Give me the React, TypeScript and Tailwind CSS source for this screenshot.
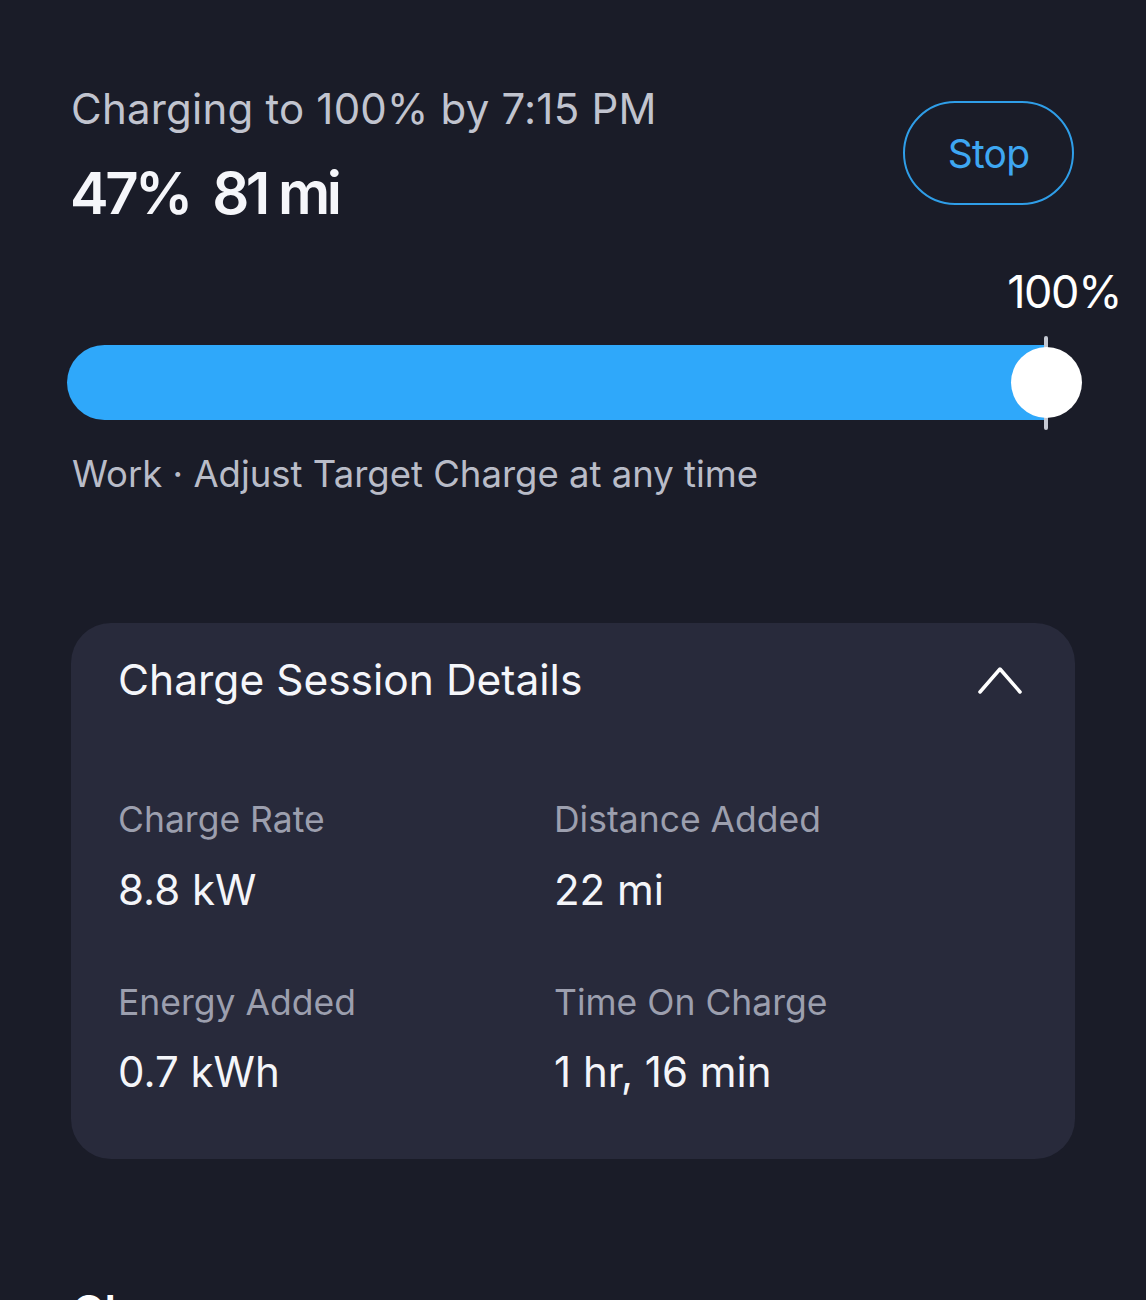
import React from "react";

const details = [
  { label: "Charge Rate", value: "8.8 kW" },
  { label: "Distance Added", value: "22 mi" },
  { label: "Energy Added", value: "0.7 kWh" },
  { label: "Time On Charge", value: "1 hr, 16 min" },
];

const ChevronUp = () => (
  <svg width="44" height="30" viewBox="0 0 44 30" fill="none">
    <polyline
      points="2,27 22,4 42,27"
      stroke="#ffffff"
      strokeWidth="3.5"
      strokeLinecap="round"
      strokeLinejoin="round"
    />
  </svg>
);

const ChargeSlider = ({ percent }: { percent: number }) => {
  // track fills up to the knob center
  return (
    <div className="relative ml-[67px] mt-[22px] h-[94px] w-[1014px]">
      <div
        className="absolute left-0 top-[9px] h-[75px] rounded-l-full bg-[#2fa8fa]"
        style={{ width: `${(979 * percent) / 100}px` }}
      />
      <div className="absolute left-[977px] top-0 h-[94px] w-[4px] rounded-full bg-[#c5c9d3]" />
      <div className="absolute left-[944px] top-[11px] h-[71px] w-[71px] rounded-full bg-white" />
    </div>
  );
};

const App = () => {
  return (
    <div
      className="h-[1300px] w-full overflow-hidden bg-[#1a1c28] text-white"
      style={{ fontFamily: "Inter, 'Noto Sans', sans-serif" }}
    >
      {/* Header */}
      <div className="flex justify-between px-[72px] pt-[88px]">
        <div>
          <p className="-ml-[1px] text-[42px] leading-none tracking-[0.005em] text-[#c1c4cf]">
            Charging to 100% by 7:15 PM
          </p>
          <p className="-ml-[2px] mt-[34px] text-[58px] font-semibold leading-none tracking-[-0.06em] text-[#f5f6fa]">
            47%&nbsp; 81 mi
          </p>
        </div>
        <button className="mt-[13px] flex h-[104px] w-[171px] items-center justify-center rounded-full border-2 border-[#2f9ee8] text-[39px] leading-none tracking-[-0.02em] text-[#3ea7f2]">
          Stop
        </button>
      </div>

      {/* Target */}
      <div className="mt-[47px] flex justify-end pr-[25px]">
        <p className="text-[45px] leading-none tracking-[-0.03em] text-white">100%</p>
      </div>

      <ChargeSlider percent={100} />

      <p className="mt-[26px] pl-[72px] text-[36.5px] leading-none text-[#b9bcc8]">
        Work · Adjust Target Charge at any time
      </p>

      {/* Charge Session Details */}
      <div className="ml-[71px] mt-[130px] w-[1004px] rounded-[40px] bg-[#282a3b] pb-[66px] pl-[47px] pr-[53px] pt-[36px]">
        <div className="flex items-center justify-between">
          <p className="text-[42.5px] leading-none text-[#f5f6fa]">
            Charge Session Details
          </p>
          <ChevronUp />
        </div>

        <div className="mt-[101px] grid grid-cols-[436px_1fr] gap-y-[74px]">
          {details.map((item) => (
            <div key={item.label}>
              <p className="text-[35.5px] leading-none text-[#9c9fae]">
                {item.label}
              </p>
              <p className="mt-[31px] text-[42px] leading-none text-[#f4f5f9]">
                {item.value}
              </p>
            </div>
          ))}
        </div>
      </div>

      <p className="ml-[72px] mt-[130px] text-[44px] font-semibold leading-none text-white">
        Charge
      </p>
    </div>
  );
};

export default App;
